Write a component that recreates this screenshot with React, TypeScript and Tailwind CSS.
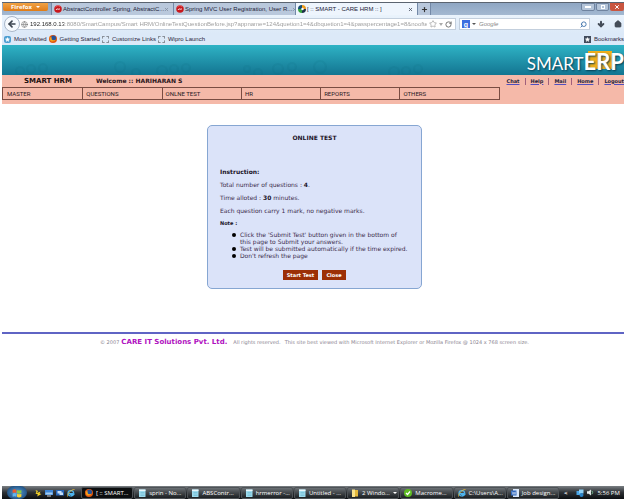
import type { ReactNode } from "react";
import { ArrowDown, ArrowLeft, Globe, House, Plus, RotateCw, Search, Star, X } from "lucide-react";

const chrome = "font-['Liberation_Sans',sans-serif]";
const verdana = "font-['DejaVu_Sans',sans-serif]";

function RedDot() {
  return (
    <svg viewBox="0 0 16 16" className="size-2 shrink-0">
      <circle cx="8" cy="8" r="7.5" fill="#c8171d" />
      <path d="M2 5c4-5 9-4 11-1" stroke="#f08080" strokeWidth="1.5" fill="none" />
      <path d="M4 10c3-5 5 1 8-3" stroke="#fff" strokeWidth="2" fill="none" />
    </svg>
  );
}

function CareIcon() {
  return (
    <svg viewBox="0 0 16 16" className="size-2 shrink-0">
      <path d="M8 0a8 8 0 0 1 8 8H8z" fill="#ee9b1c" />
      <path d="M8 0a8 8 0 0 0-8 8h8z" fill="#174d72" />
      <path d="M0 8a8 8 0 0 0 8 8V8z" fill="#35a33d" />
      <path d="M16 8a8 8 0 0 1-8 8V8z" fill="#1d3148" />
      <circle cx="9" cy="8" r="2.5" fill="#fff" />
    </svg>
  );
}

function FirefoxIcon() {
  return (
    <svg viewBox="0 0 16 16" className="size-2 shrink-0">
      <circle cx="8" cy="8" r="8" fill="#e1560f" />
      <circle cx="9" cy="6" r="5" fill="#23539b" />
      <path d="M1 3c1 2 3 2 5 2L5 8c2 3 5 3 8 1-1 4-8 6-11 1z" fill="#f6a21b" />
    </svg>
  );
}

function IeIcon() {
  return (
    <svg viewBox="0 0 16 16" className="size-2 shrink-0">
      <path d="M13.500 9H5c1 3 5 3 6 1.500h3C11 16 2 15 2 8.500S13 1 13.500 9" fill="none" stroke="#4db4ee" strokeWidth="2.500" />
      <path d="M1 15C-1 11 9 0 15 1" fill="none" stroke="#f4c63c" strokeWidth="1.500" />
    </svg>
  );
}

function NotepadIcon() {
  return (
    <svg viewBox="0 0 16 16" className="size-2 shrink-0">
      <rect x="2" y="1" width="13" height="15" fill="#9fdcee" />
      <rect x="2" y="1" width="13" height="3" fill="#e9f7fb" />
      <path d="M5 7h8M5 10h8M5 13h8" stroke="#5daec8" />
    </svg>
  );
}

function FolderIcon() {
  return (
    <svg viewBox="0 0 16 16" className="size-2 shrink-0">
      <path d="M2 1h6v15H2z" fill="#f9e38c" />
      <path d="M8 2h6v13H8z" fill="#e5b93b" />
    </svg>
  );
}

function CheckIcon() {
  return (
    <svg viewBox="0 0 16 16" className="size-2 shrink-0">
      <circle cx="8" cy="8" r="8" fill="#5dbb22" />
      <path d="M4 8l3 3 5-6" stroke="#fff" strokeWidth="2.500" fill="none" />
    </svg>
  );
}

function WordIcon() {
  return (
    <svg viewBox="0 0 16 16" className="size-2 shrink-0">
      <path d="M4 0h12v16H4z" fill="#dbe8fa" />
      <path d="M0 3h11v10H0z" fill="#2d66bd" />
      <path d="M2 5l2 6 2-5 2 5 2-6" stroke="#fff" fill="none" />
    </svg>
  );
}

const tabs = [
  { icon: <RedDot />, title: "AbstractController Spring, AbstractC...", active: false },
  { icon: <RedDot />, title: "Spring MVC User Registration, User R...", active: false },
  { icon: <CareIcon />, title: "[ :: SMART - CARE HRM :: ]", active: true },
];

function TabStrip() {
  return (
    <div className="flex h-3 items-stretch bg-linear-to-b from-[#8fa6c3] to-[#a3b8d1] pl-px">
      <button className="mb-1 flex w-[45px] shrink-0 items-center justify-center gap-1 rounded-b-xs bg-linear-to-b from-[#f0a244] to-[#e07c14] font-['Open_Sans',sans-serif] text-[6px] leading-none font-bold text-white">
        Firefox
        <span className="border-x-2 border-t-2 border-x-transparent border-t-white" />
      </button>
      <div role="tablist" className="ml-[3px] flex items-stretch">
        {tabs.map((t) => (
          <div
            key={t.title}
            className={`flex w-[122px] items-center border-l border-[#7389a8] pr-1 pl-[2px] ${t.active ? "bg-[#eef5fd]" : "bg-[#b9c8dc]"}`}
          >
            <button role="tab" aria-selected={t.active} className="flex grow items-center gap-px text-[6px] leading-none whitespace-nowrap text-[#222238]">
              {t.icon}
              {t.title}
            </button>
            <button aria-label="Close tab">
              <X className={`size-[5px] ${t.active ? "text-[#4d5666]" : "text-[#8490a2]"}`} strokeWidth={4} />
            </button>
          </div>
        ))}
        <button aria-label="New tab" className="flex w-[14px] items-center justify-center border-x border-[#7389a8] bg-[#b9c8dc]">
          <Plus className="size-[7px] text-[#333]" strokeWidth={4} />
        </button>
      </div>
      <div className="ml-auto flex h-2 items-stretch gap-px">
        <button aria-label="Minimize" className="flex w-[14px] items-center justify-center rounded-b-xs border border-[#6f839f] bg-[#b4c4d8]">
          <span className="h-[2px] w-[6px] bg-white" />
        </button>
        <button aria-label="Restore" className="flex w-[13px] items-center justify-center rounded-b-xs border border-[#6f839f] bg-[#b4c4d8]">
          <span className="size-1 border border-white" />
        </button>
        <button aria-label="Close window" className="flex w-[14px] items-center justify-center rounded-b-xs bg-[#c9553f]">
          <X className="size-[6px] text-white" strokeWidth={4} />
        </button>
      </div>
    </div>
  );
}

function AddressBar() {
  return (
    <div className="flex h-[18px] items-center bg-linear-to-b from-[#eaf3fc] to-[#dce9f8] pr-[2px] pl-[2px] text-[6px]">
      <button aria-label="Back" className="z-10 flex size-4 shrink-0 items-center justify-center rounded-full border border-[#a9b7c9] bg-[#f6fafe]">
        <ArrowLeft className="size-[10px] text-[#3b444f]" strokeWidth={4} />
      </button>
      <div className="-ml-1 flex h-3 grow items-center gap-[2px] border border-[#c3cfdd] bg-white pr-[3px] pl-1">
        <Globe className="size-[7px] shrink-0 text-[#777]" />
        <input
          aria-label="Address"
          defaultValue="192.168.0.13:8080/SmartCampus/Smart HRM/OnlineTestQuestionBefore.jsp?appname=124&quetion1=4&dbquetion1=4&passpercentage1=8&nooftestt;"
          className="min-w-0 grow bg-[linear-gradient(90deg,#222_34px,#999_34px)] bg-clip-text text-[6px] text-transparent outline-none"
        />
        <Star className="size-2 shrink-0 text-[#999]" />
        <span className="border-x-2 border-t-3 border-x-transparent border-t-[#aaa]" />
        <button aria-label="Reload">
          <RotateCw className="size-[7px] text-[#666]" strokeWidth={3} />
        </button>
      </div>
      <div className="ml-[3px] flex h-3 w-[131px] shrink-0 items-center gap-[3px] border border-[#c3cfdd] bg-white px-[2px]">
        <button aria-label="Search engine" className="flex items-center gap-[2px]">
          <span className="flex size-2 items-center justify-center bg-[#3d6ee0] text-[7px] leading-none font-bold text-white">g</span>
          <span className="border-x-2 border-t-2 border-x-transparent border-t-[#555]" />
        </button>
        <input aria-label="Search" placeholder="Google" className="min-w-0 grow text-[6px] outline-none placeholder:text-[#888] placeholder:italic" />
        <Search className="size-[7px] text-[#3a6fa8] -scale-x-100" strokeWidth={3} />
      </div>
      <button aria-label="Downloads" className="ml-[7px]">
        <ArrowDown className="size-2 text-[#444c58]" strokeWidth={6} />
      </button>
      <button aria-label="Home" className="ml-[9px]">
        <House className="size-2 fill-[#444c58] text-[#444c58]" strokeWidth={2} />
      </button>
    </div>
  );
}

function Bookmark({ icon, children }: { icon: ReactNode; children: ReactNode }) {
  return (
    <a href="#" className="flex items-center gap-[3px]">
      {icon}
      {children}
    </a>
  );
}

function BookmarkBar() {
  const empty = <span className="size-[7px] border border-dashed border-[#8a9099]" />;
  return (
    <div className="flex h-3 items-center gap-[2px] bg-[#dce9f8] pl-[2px] text-[6px] leading-none whitespace-nowrap text-[#2a1f3d]">
      <Bookmark icon={<span className="flex size-[7px] items-center justify-center rounded-xs bg-[#4c9ed1]"><Star className="size-[5px] fill-white text-white" /></span>}>
        Most Visited
      </Bookmark>
      <Bookmark icon={<FirefoxIcon />}>Getting Started</Bookmark>
      <Bookmark icon={empty}>Customize Links</Bookmark>
      <Bookmark icon={empty}>Wipro Launch</Bookmark>
      <button className="ml-auto flex items-center gap-[3px]">
        <span className="flex size-[7px] items-center justify-center bg-[#414b5c]">
          <Star className="size-[5px] fill-white text-white" />
        </span>
        Bookmarks
      </button>
    </div>
  );
}

const bubbles = [
  [18, 26, 4], [29, 24, 4], [41, 23, 4], [118, 22, 5], [134, 28, 4], [160, 26, 5], [172, 24, 4], [184, 23, 4],
  [245, 24, 3], [256, 28, 4], [276, 24, 5], [290, 22, 4], [318, 22, 6], [392, 27, 5], [404, 26, 4], [416, 24, 4],
];

function Banner() {
  return (
    <header className="relative flex h-[30px] items-end justify-end overflow-hidden bg-linear-to-b from-[#2fb3c5] to-[#137591]">
      <svg className="absolute inset-0 size-full" fill="none" stroke="#0b5f78" strokeOpacity="0.1" strokeWidth="2">
        {bubbles.map(([x, y, r]) => (
          <circle key={x} cx={x} cy={y} r={r} />
        ))}
      </svg>
      <h1 className="relative flex items-baseline font-['Lato',sans-serif] leading-[23px] text-white [text-shadow:1px_1px_2px_#063c50]">
        <span className="text-[17px]">SMART</span>
        <span className="relative text-[22px] font-bold">
          <span className="absolute top-px left-1 h-[18px] w-6 bg-[#f0b01c]" />
          <span className="relative">ERP</span>
        </span>
      </h1>
    </header>
  );
}

const menu = ["MASTER", "QUESTIONS", "ONLNE TEST", "HR", "REPORTS", "OTHERS"];
const links = ["Chat", "Help", "Mail", "Home", "Logout"];

function SiteNav() {
  return (
    <div className={`bg-[#f5b9a9] pb-1 ${verdana}`}>
      <div className="flex h-3 items-center overflow-hidden whitespace-nowrap">
        <strong className="w-[94px] pl-[22px] text-[7px] leading-none text-[#1c1010]">SMART HRM</strong>
        <strong className="text-[6px] leading-none text-[#2c1620]">Welcome :: HARIHARAN S</strong>
        <nav className="ml-auto flex text-[5px] leading-[7px] font-bold text-[#24243c]">
          {links.map((l, i) => (
            <span key={l} className={i > 0 ? "ml-[5px] border-l border-[#a0607c] pl-[5px]" : ""}>
              <a href="#" className="underline decoration-[#5050c0]">{l}</a>
            </span>
          ))}
        </nav>
      </div>
      <nav className="grid h-[13px] w-4/5 grid-cols-[repeat(5,16fr)_20fr] border border-[#7a4c42] font-['Roboto',sans-serif] text-[6px] leading-[11px] text-[#2a1a24]">
        {menu.map((m, i) => (
          <a key={m} href="#" className={i > 0 ? "border-l border-[#7a4c42] pl-[3px]" : "pl-1"}>
            {m}
          </a>
        ))}
      </nav>
    </div>
  );
}

const notes = [
  "Click the 'Submit Test' button given in the bottom of this page to Submit your answers.",
  "Test will be submitted automatically if the time expired.",
  "Don't refresh the page",
];

function TestCard() {
  return (
    <section className="mx-auto w-[215px] rounded-[5px] border border-[#86a6d2] bg-[#dbe3f9] px-3 py-2 text-[6px] leading-[7px] text-[#3b2c4c]">
      <h2 className="text-center font-bold text-[#1c1428]">ONLINE TEST</h2>
      <h3 className="mt-[27px] font-bold text-[#1c1428]">Instruction:</h3>
      <p className="mt-[6px]">Total number of questions : <b className="text-[#1c1428]">4</b>.</p>
      <p className="mt-[6px]">Time alloted : <b className="text-[#1c1428]">30</b> minutes.</p>
      <p className="mt-[6px]">Each question carry 1 mark, no negative marks.</p>
      <h4 className="mt-[6px] text-[5px] font-bold text-[#1c1428]">Note :</h4>
      <ul className="mt-1 -mr-1 pl-3">
        {notes.map((n) => (
          <li key={n} className="flex gap-1 before:mt-[2px] before:size-1 before:shrink-0 before:rounded-full before:bg-black">
            <span className="max-w-[169px]">{n}</span>
          </li>
        ))}
      </ul>
      <div className="mt-[11px] flex justify-center gap-1 text-[5px] leading-[10px] font-bold text-white">
        <button className="w-[35px] bg-[#9c2f06]">Start Test</button>
        <button className="w-6 bg-[#9c2f06]">Close</button>
      </div>
    </section>
  );
}

const tasks = [
  { icon: <FirefoxIcon />, title: "[ :: SMART...", active: true },
  { icon: <NotepadIcon />, title: "sprin - No..." },
  { icon: <NotepadIcon />, title: "ABSContr..." },
  { icon: <NotepadIcon />, title: "hrmerror -..." },
  { icon: <NotepadIcon />, title: "Untitled - ..." },
  { icon: <FolderIcon />, title: "2 Windo...", more: true },
  { icon: <CheckIcon />, title: "Macrome..." },
  { icon: <IeIcon />, title: "C:\\Users\\A..." },
  { icon: <WordIcon />, title: "Job design..." },
];

function Taskbar() {
  return (
    <footer className="flex h-[13px] items-center bg-linear-to-b from-[#7b8084] via-[#2c3034] to-[#0c0f12] pl-[5px] font-['Open_Sans',sans-serif] text-[6px] leading-none whitespace-nowrap text-white">
      <button aria-label="Start" className="mr-[7px] flex h-[13px] w-5 shrink-0 items-center justify-center rounded-full bg-radial from-[#5aa0d8] to-[#123a68]">
        <svg viewBox="0 0 16 16" className="size-[10px]">
          <path d="M1 3q3-2 6 0v5q-3-2-6 0z" fill="#ee5a2c" />
          <path d="M8 3q3 2 7 0v5q-4 2-7 0z" fill="#8ccb3f" />
          <path d="M1 9q3-2 6 0v5q-3-2-6 0z" fill="#62b5ee" />
          <path d="M8 9q3 2 7 0v5q-4 2-7 0z" fill="#fbd12f" />
        </svg>
      </button>
      <div className="mr-[6px] flex shrink-0 items-center gap-[3px]">
        <svg viewBox="0 0 16 16" className="size-2">
          <path d="M3 2l5 2-2 4 7-3-2 4 4 1-9 5 2-4-5-2 2-3z" fill="#f5d328" />
        </svg>
        <svg viewBox="0 0 16 16" className="size-2">
          <path d="M0 2h16v10H0z" fill="#3d86d8" />
          <path d="M1 7h14v4H1z" fill="#a4cdf2" />
          <path d="M4 14h8" stroke="#ccc" strokeWidth="2" />
        </svg>
        <svg viewBox="0 0 16 16" className="size-2">
          <path d="M0 2h16v11H0z" fill="#2665b8" />
          <path d="M3 4h8v5H3zM7 7h7v5H7z" fill="#c6def6" />
        </svg>
        <IeIcon />
      </div>
      <div className="flex min-w-0 grow gap-px">
        {tasks.map((t) => (
          <button
            key={t.title}
            className={`flex h-3 min-w-0 flex-1 items-center gap-[3px] rounded-xs border border-[#4e5357] pl-[3px] ${t.active ? "bg-[#0c0e10]" : "bg-linear-to-b from-[#6b7074] to-[#1c2023]"}`}
          >
            {t.icon}
            {t.title}
            {t.more && <span className="mr-[2px] ml-auto border-x-2 border-t-2 border-x-transparent border-t-white" />}
          </button>
        ))}
      </div>
      <div className="flex w-[65px] shrink-0 items-center gap-[3px] pl-[5px]">
        <span className="mr-[6px] font-bold">&lt;</span>
        <svg viewBox="0 0 16 16" className="size-2">
          <path d="M1 4h9v8H1z" fill="#4aa6e8" />
          <path d="M6 1h9v8H6z" fill="#8ed0f5" />
          <circle cx="11" cy="12" r="4" fill="#2a83c8" />
        </svg>
        <svg viewBox="0 0 16 16" className="size-[7px]">
          <path d="M0 5h4l5-4v14l-5-4H0z" fill="#e8eef0" />
          <path d="M11 4q4 4 0 8" stroke="#7fd0a0" strokeWidth="2" fill="none" />
        </svg>
        <time>5:56 PM</time>
      </div>
    </footer>
  );
}

export default function App() {
  return (
    <div className={`flex min-h-screen flex-col overflow-hidden bg-white pt-[2px] pl-[2px] ${chrome}`}>
      <div className="h-px bg-[#5b6470]" />
      <TabStrip />
      <AddressBar />
      <BookmarkBar />
      <Banner />
      <SiteNav />
      <main className={`grow ${verdana}`}>
        <div className="pt-[21px] pb-[43px] pl-[3px]">
          <TestCard />
        </div>
        <p className="flex items-baseline justify-center gap-[2px] border-t-2 border-[#5f64c4] pt-1 pl-[3px] text-[5px] leading-[9px] whitespace-nowrap text-[#8a8490]">
          <span>© 2007</span>
          <strong className="text-[7px] text-[#b010c0]">CARE IT Solutions Pvt. Ltd.</strong>
          <span className="ml-1">All rights reserved.</span>
          <span className="ml-[2px]">This site best viewed with Microsoft Internet Explorer or Mozilla Firefox @ 1024 x 768 screen size.</span>
        </p>
      </main>
      <Taskbar />
    </div>
  );
}
